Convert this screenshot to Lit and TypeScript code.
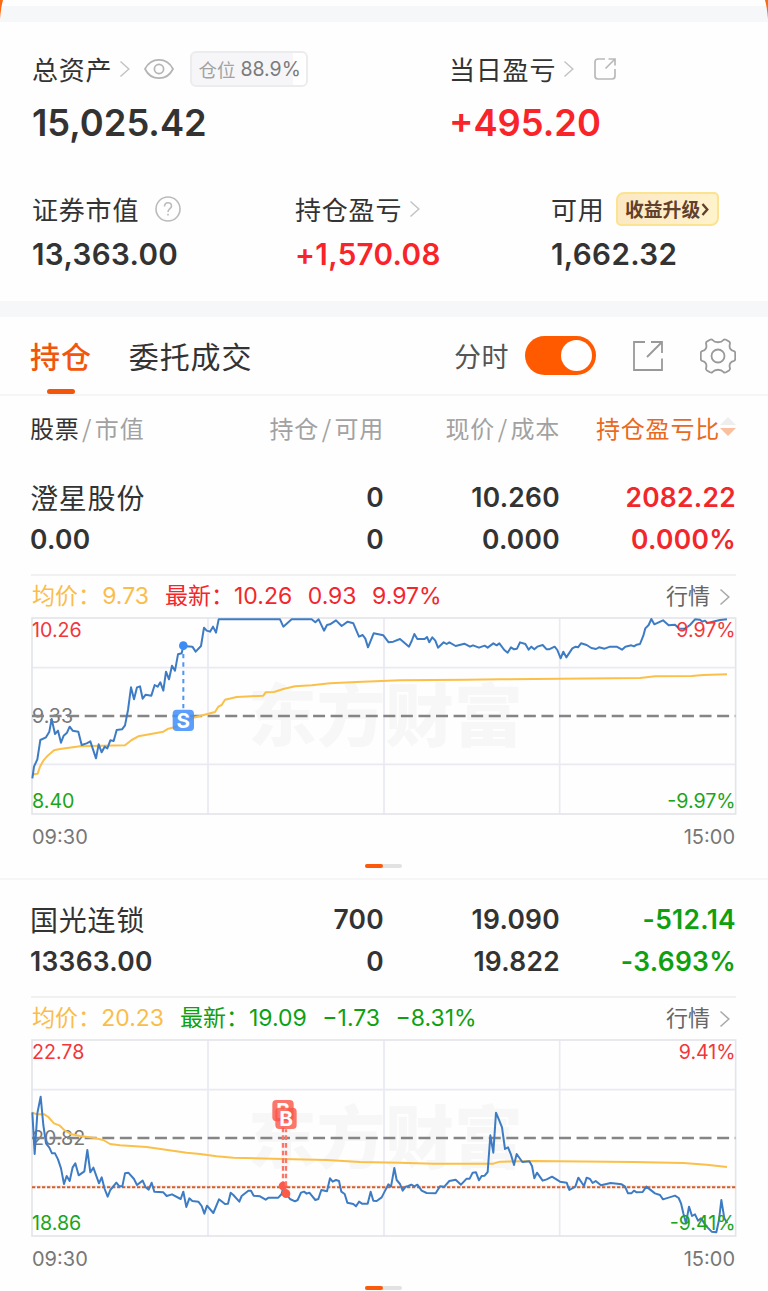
import { LitElement, html, svg, css } from "lit";
import { customElement, property } from "lit/decorators.js";

interface Stock {
  name: string;
  value: string;
  held: string;
  usable: string;
  price: string;
  cost: string;
  profit: string;
  ratio: string;
  tone: string;
  average: string;
  quote: string[];
  chart: Chart;
}

interface Chart {
  top: number;
  high: string;
  mid: string;
  low: string;
  highPct: string;
  lowPct: string;
  priceLine: string;
  averageLine: string;
  costLevel?: number;
  sells: number[][];
  buys: number[][];
}

const stocks: Stock[] = [
  {
    name: "澄星股份", value: "0.00", held: "0", usable: "0", price: "10.260", cost: "0.000",
    profit: "2082.22", ratio: "0.000%", tone: "up", average: "9.73",
    quote: ["10.26", "0.93", "9.97%"],
    chart: {
      top: 141, high: "10.26", mid: "9.33", low: "8.40", highPct: "9.97%", lowPct: "-9.97%",
      sells: [[550, 227, 451]],
      buys: [],
      priceLine: "97,625 102,590 112,568 121,510 138,502 148,485 155,447 165,492 174,482 183,518 191,497 201,488 209,470 218,482 235,485 245,525 260,520 271,514 288,565 296,523 305,547 314,530 322,535 331,511 341,513 350,480 366,478 375,466 384,420 393,352 402,388 411,352 420,349 428,386 437,374 454,377 464,345 473,350 481,337 490,362 498,305 507,328 516,287 525,302 534,253 545,250 550,228 577,230 587,245 603,228 612,173 620,182 630,185 639,170 648,188 656,148 840,148 850,170 875,148 935,148 946,157 956,148 972,182 981,165 990,163 1008,151 1025,168 1043,155 1060,160 1077,200 1088,195 1096,206 1104,232 1121,190 1150,196 1166,217 1180,215 1200,207 1227,230 1235,213 1243,192 1252,207 1274,207 1281,201 1288,217 1297,202 1306,212 1314,233 1331,217 1340,222 1348,217 1367,228 1393,221 1410,230 1419,226 1437,233 1454,227 1463,233 1480,220 1490,226 1498,220 1513,240 1523,248 1533,232 1542,238 1551,236 1560,217 1576,222 1586,239 1594,230 1603,238 1612,230 1628,225 1640,238 1647,238 1664,230 1672,240 1682,265 1690,245 1699,262 1717,235 1727,230 1734,232 1743,220 1760,225 1774,234 1788,237 1797,232 1814,236 1830,230 1850,230 1866,239 1876,230 1894,226 1902,229 1910,224 1920,222 1930,197 1936,175 1946,165 1954,147 1963,163 1989,151 2006,166 2025,164 2038,176 2055,176 2070,165 2085,148 2100,149 2107,155 2115,152 2122,159 2160,150 2181,148",
      averageLine: "97,617 103,612 113,611 120,590 130,572 143,557 162,541 180,537 240,529 375,526 395,510 415,499 490,485 505,476 530,470 560,452 585,442 645,426 655,410 665,405 675,389 710,381 790,377 797,367 822,366 850,357 885,349 935,346 990,340 1070,336 1200,331 1400,329 1500,328 1680,326 1920,324 1965,319 2075,318 2110,315 2181,313",
    },
  },
  {
    name: "国光连锁", value: "13363.00", held: "700", usable: "0", price: "19.090", cost: "19.822",
    profit: "-512.14", ratio: "-3.693%", tone: "down", average: "20.23",
    quote: ["19.09", "−1.73", "−8.31%"],
    chart: {
      top: 477, high: "22.78", mid: "20.82", low: "18.86", highPct: "9.41%", lowPct: "-9.41%",
      costLevel: 922,
      sells: [],
      buys: [[849, 918, 692], [858, 941, 715]],
      priceLine: "97,697 104,822 112,700 122,650 130,735 138,790 148,803 156,820 165,820 174,838 183,865 192,912 200,888 209,903 218,862 226,850 236,886 253,874 262,810 271,877 280,863 297,910 305,892 314,927 323,950 331,930 349,908 358,919 367,919 375,880 385,878 402,897 411,915 428,902 437,922 446,929 455,908 463,935 490,937 500,948 516,943 542,957 550,935 559,981 568,955 577,963 595,965 605,978 613,1001 621,977 640,999 657,958 675,972 684,971 692,938 700,945 718,965 725,948 745,932 753,932 761,947 780,949 797,959 806,953 835,953 845,942 850,920 858,940 870,957 885,964 893,960 903,938 912,935 920,941 928,938 946,960 955,957 964,930 981,934 990,895 998,905 1008,900 1017,903 1024,935 1034,942 1042,968 1060,972 1068,979 1077,965 1086,971 1103,971 1112,935 1120,962 1130,963 1145,952 1165,913 1173,920 1183,864 1190,900 1200,912 1208,932 1217,920 1225,918 1234,914 1243,919 1252,914 1265,932 1280,939 1307,940 1320,919 1333,920 1348,903 1367,899 1383,914 1400,896 1409,896 1418,878 1428,877 1437,901 1445,888 1454,887 1463,876 1471,766 1480,818 1488,698 1498,722 1506,742 1515,807 1524,802 1533,824 1542,855 1550,822 1567,846 1588,844 1596,858 1603,895 1611,878 1628,902 1640,898 1656,890 1680,905 1700,908 1708,930 1726,920 1735,893 1752,918 1760,893 1770,897 1778,909 1787,903 1803,916 1832,909 1865,913 1875,920 1884,940 1894,940 1902,932 1910,937 1928,936 1939,920 1965,940 1980,945 1989,958 2025,947 2036,954 2043,970 2050,1000 2058,1030 2067,980 2076,1008 2085,1003 2094,1022 2103,1015 2120,1040 2135,1055 2149,1057 2157,1020 2164,960 2173,1015 2182,1030",
      averageLine: "97,697 110,703 133,703 145,711 162,730 178,736 195,752 215,763 240,768 280,773 310,780 330,792 360,796 440,801 560,818 600,822 650,829 700,833 850,837 980,840 1080,846 1200,848 1300,851 1480,851 1500,845 1600,843 1900,846 2050,849 2120,854 2181,861",
    },
  },
];

const chevron = (cls: string) =>
  html`<svg class=${cls} viewBox="0 0 12 18"><path d="M1.5 1.5 9.8 9 1.5 16.5" /></svg>`;

@customElement("trend-chart")
export class TrendChart extends LitElement {
  @property({ attribute: false }) data!: Chart;

  static styles = css`
    :host { display: block; height: 198px; }
    svg { display: block; width: 706px; height: 198px; overflow: hidden; }
    text { font-family: Inter, "Liberation Sans", sans-serif; font-size: 59px; }
    polyline { fill: none; stroke-linejoin: round; }
    .grid { stroke: #e9eaf2; stroke-width: 5; fill: none; }
    .frame { stroke: #e4e5ea; stroke-width: 5; }
    .watermark { font-family: "Noto Sans CJK SC", sans-serif; font-size: 206px; font-weight: 900; fill: #f7f7f7; }
    .mid { stroke: #858585; stroke-width: 7; stroke-dasharray: 36 16.7; }
    .cost { stroke: #dc5c22; stroke-width: 6; stroke-dasharray: 10 5; }
    .avg { stroke: #fbc04a; stroke-width: 6; }
    .price { stroke: #3d7cc4; stroke-width: 6; }
    .up { fill: #f1373a; }
    .down { fill: #1ba51b; }
    .center { fill: #777; }
    .end { text-anchor: end; }
    .sell { fill: #3c8cf5; }
    .sell-line { stroke: #4b96f8; stroke-width: 6; stroke-dasharray: 13 12; }
    .buy { fill: #fb5a4b; }
    .tag-buy { fill: #fa5546; opacity: .8; }
    .tag-sell { fill: #4591fa; opacity: .88; }
    .buy-line { stroke: #fb7568; stroke-width: 7; stroke-dasharray: 14 9; }
    .tag-text { fill: #fff; font-size: 62px; font-weight: 700; text-anchor: middle; }
  `;

  render() {
    const d = this.data;
    const t = d.top;
    const tag = (p: number[], kind: string, letter: string) => svg`
      <line class="${kind}-line" x1=${p[0]} x2=${p[0]} y1=${p[1]} y2=${p[2] + (p[2] > p[1] ? -33 : 33)} />
      <circle class=${kind} cx=${p[0]} cy=${p[1]} r="13" />
      <rect class="tag-${kind}" x=${p[0] - 32} y=${p[2] - 32} width="64" height="64" rx="12" />
      <text class="tag-text" x=${p[0]} y=${p[2] + 22}>${letter}</text>`;
    return html`
      <svg viewBox="93 ${t} 2118 594">
        <text class="watermark" x="744" y=${t + 371}>东方财富</text>
        <path class="grid" d="M95 ${t + 152}H2207M95 ${t + 442}H2207M624 ${t + 2}V${t + 592}M1152 ${t + 2}V${t + 592}M1679 ${t + 2}V${t + 592}" />
        <rect class="grid frame" x="96" y=${t + 3} width="2111" height="588" />
        <text class="center" x="96" y=${t + 317}>${d.mid}</text>
        <line class="mid" x1="96" x2="2206" y1=${t + 297} y2=${t + 297} />
        <polyline class="avg" points=${d.averageLine} />
        ${d.costLevel ? svg`<line class="cost" x1="96" x2="2206" y1=${d.costLevel} y2=${d.costLevel} />` : null}
        <polyline class="price" points=${d.priceLine} />
        ${d.sells.map((p) => tag(p, "sell", "S"))}
        ${d.buys.map((p) => tag(p, "buy", "B"))}
        <text class="up" x="96" y=${t + 59}>${d.high}</text>
        <text class="down" x="96" y=${t + 573}>${d.low}</text>
        <text class="up end" x="2207" y=${t + 59}>${d.highPct}</text>
        <text class="down end" x="2207" y=${t + 573}>${d.lowPct}</text>
      </svg>`;
  }
}

@customElement("stock-item")
export class StockItem extends LitElement {
  @property({ attribute: false }) stock!: Stock;

  static styles = css`
    :host { display: flex; flex-direction: column; box-sizing: border-box; height: 422px; padding: 18px 32px 0 31px; border-bottom: 2px solid #f6f6f7; color: #333; }
    .grid { display: grid; grid-template-columns: 177px repeat(3, 176px); grid-auto-rows: 42px; margin-left: -1px; width: 706px; align-items: center; justify-items: end; font: 600 26.4px Inter, "Liberation Sans", sans-serif; letter-spacing: .3px; }
    .grid > :nth-child(4n + 1) { justify-self: start; }
    .grid > :not(:nth-child(4n + 1)) { margin-right: -1px; }
    .name { font: 400 28px "Noto Sans CJK SC", sans-serif; letter-spacing: .8px; }
    .up { color: #f2272b; }
    .down { color: #0fa00f; }
    .info { display: flex; align-items: center; height: 41px; margin-top: 14px; padding-left: 1px; border-top: 2px solid #f1f1f1; font: 400 23px/41px Inter, "Noto Sans CJK SC", sans-serif; }
    .avg { display: flex; justify-content: space-between; color: #fbbd4a; width: 117px; margin-right: 16px; }
    .avg.wide { width: 132px; }
    .info .num { margin-right: 15.500px; }
    .more { display: flex; align-items: center; gap: 9px; margin-left: auto; margin-right: 5px; color: #666; font-size: 22px; }
    .arrow { width: 12px; height: 18px; fill: none; stroke: #aaa; stroke-width: 1.6; }
    .times { display: flex; justify-content: space-between; margin-top: 8px; padding: 0 1px; height: 28px; font: 400 20px/28px Inter, sans-serif; color: #777; }
    .pager { align-self: center; display: flex; width: 37px; height: 4px; margin-top: 13px; border-radius: 2px; background: #e2e2e2; }
    .pager i { width: 18px; border-radius: 2px; background: #fc5a0a; }
  `;

  render() {
    const s = this.stock;
    return html`
      <div class="grid">
        <span class="name">${s.name}</span><span>${s.held}</span><span>${s.price}</span><span class=${s.tone}>${s.profit}</span>
        <span>${s.value}</span><span>${s.usable}</span><span>${s.cost}</span><span class=${s.tone}>${s.ratio}</span>
      </div>
      <div class="info">
        <span class="avg ${s.average.length > 4 ? "wide" : ""}"><span>均价：</span><span>${s.average}</span></span>
        <span class=${s.tone}>最新：</span>${s.quote.map((q) => html`<span class="num ${s.tone}">${q}</span>`)}
        <span class="more">行情${chevron("arrow")}</span>
      </div>
      <trend-chart .data=${s.chart}></trend-chart>
      <div class="times"><span>09:30</span><span>15:00</span></div>
      <div class="pager"><i></i></div>`;
  }
}

@customElement("app-root")
export class AppRoot extends LitElement {
  static styles = css`
    :host { display: block; position: relative; width: 768px; height: 1291px; overflow: hidden; background: #fefefe; color: #333; font-family: "Noto Sans CJK SC", sans-serif; }
    svg { flex: none; fill: none; }
    .corner { position: absolute; top: 0; width: 4px; height: 19px; fill: #fb6a14; }
    .corner.left { left: 0; }
    .corner.right { right: 0; }
    .band { height: 16px; background: #f6f7f9; }
    .band.first { margin-top: 6px; }
    .summary { height: 279px; box-sizing: border-box; padding: 27px 0 0 32px; }
    .row { display: grid; }
    .row.total { grid-template-columns: 417px 1fr; }
    .row.detail { grid-template-columns: 263px 256px 1fr; margin-top: 32px; }
    .label { display: flex; align-items: center; height: 40px; font-size: 26px; letter-spacing: .8px; }
    .label > .t { margin-bottom: 2px; }
    .big { height: 68px; font: 600 36.3px/68px Inter, sans-serif; }
    .mid { height: 50px; font: 600 29.6px/50px Inter, sans-serif; letter-spacing: .35px; }
    .red { color: #f8242a; }
    .chev { width: 12px; height: 18px; margin-left: 7px; stroke: #c4c4c4; stroke-width: 1.5; }
    .eye { width: 30px; height: 22px; margin-left: 13px; stroke: #b4b4b4; stroke-width: 1.7; }
    .badge { box-sizing: border-box; display: flex; align-items: center; gap: 5px; width: 118px; height: 36px; margin-left: 16px; padding-left: 6px; border: 2px solid #ececee; border-radius: 6px; background: linear-gradient(90deg, #f6f6f9 88.9%, #fff 88.9%); color: #a2a2a2; font-size: 18.5px; letter-spacing: 0; }
    .badge b { font: 400 19.5px Inter, sans-serif; color: #7b7b7b; }
    .share { width: 24px; height: 24px; margin-left: 18px; stroke: #b9b9b9; stroke-width: 1.7; }
    .help { width: 26px; height: 26px; margin-left: 16px; stroke: #bbb; stroke-width: 1.6; }
    .promo { box-sizing: border-box; display: flex; align-items: center; justify-content: center; width: 103px; height: 34px; margin-left: 11px; border: 2px solid #fbe38f; border-radius: 8px 5px 8px 5px; background: linear-gradient(100deg, #fbe8c4, #fff3cc); color: #62402c; font-size: 18.8px; font-weight: 700; letter-spacing: 0; }
    .promo span { margin-bottom: 2px; }
    .promo svg { width: 8px; height: 13px; margin-left: 1px; stroke: #62402c; stroke-width: 2.4; }
    .tabs { display: flex; align-items: center; height: 79px; box-sizing: border-box; padding: 0 32px 0 30px; border-bottom: 2px solid #f5f5f6; font-size: 30px; letter-spacing: .9px; }
    .tab { display: flex; flex-direction: column; align-items: center; height: 77px; line-height: 76px; margin-right: 37px; }
    .tab.on { color: #f1560b; font-weight: 500; }
    .tab i { width: 28px; height: 6px; margin-top: -4px; border-radius: 3px; background: #f1560b; }
    .toggle-label { margin-left: auto; font-size: 27px; letter-spacing: .5px; color: #555; }
    .toggle { display: flex; justify-content: flex-end; box-sizing: border-box; width: 71px; height: 39px; margin-left: 16px; padding: 4px; border-radius: 20px; background: #ff5a00; }
    .toggle i { width: 31px; height: 31px; border-radius: 50%; background: #fff; }
    .open { width: 32px; height: 32px; margin-left: 36px; stroke: #999; stroke-width: 1.8; }
    .gear { width: 36px; height: 36px; margin-left: 36px; stroke: #999; stroke-width: 1.8; }
    .head { display: grid; grid-template-columns: 1fr 176px 176px 176px; height: 62px; align-items: center; justify-items: end; padding: 0 32px 0 30px; font-size: 24px; letter-spacing: .8px; color: #a2a2a2; }
    .head > :first-child { justify-self: start; }
    .head b { font-weight: 400; color: #333; }
    .head em { font-style: normal; margin: 0 2.5px; }
    .sort { display: flex; align-items: center; color: #e96a1f; }
    .sort svg { width: 16px; height: 24px; }
  `;

  render() {
    return html`
      <svg class="corner left" viewBox="0 0 4 19"><path d="M0 0H3Q1 7 0 19Z" /></svg>
      <svg class="corner right" viewBox="0 0 4 19"><path d="M4 0H1Q3 7 4 19Z" /></svg>
      <div class="band first"></div>
      <section class="summary">
        <div class="row total">
          <div>
            <div class="label"><span class="t">总资产</span>${chevron("chev")}
              <svg class="eye" viewBox="0 0 30 22"><path d="M1 11C7-1.200 23-1.200 29 11C23 23.200 7 23.200 1 11Z" /><circle cx="15" cy="11" r="4.600" /></svg>
              <span class="badge">仓位<b>88.9%</b></span>
            </div>
            <div class="big">15,025.42</div>
          </div>
          <div>
            <div class="label"><span class="t">当日盈亏</span>${chevron("chev")}
              <svg class="share" viewBox="0 0 24 24"><path d="M12 2H5Q2 2 2 5V19Q2 22 5 22H19Q22 22 22 19V12M15.500 2H22V8.500M22 2 12.500 11.500" /></svg>
            </div>
            <div class="big red">+495.20</div>
          </div>
        </div>
        <div class="row detail">
          <div>
            <div class="label"><span class="t">证券市值</span>
              <svg class="help" viewBox="0 0 26 26"><circle cx="13" cy="13" r="12" /><path d="M9.500 10.500C9.500 5.500 16.500 5.500 16.500 10C16.500 12.700 13 12.600 13 16M13 17.800V19.600" /></svg>
            </div>
            <div class="mid">13,363.00</div>
          </div>
          <div>
            <div class="label"><span class="t">持仓盈亏</span>${chevron("chev")}</div>
            <div class="mid red">+1,570.08</div>
          </div>
          <div>
            <div class="label"><span class="t">可用</span><span class="promo"><span>收益升级</span><svg viewBox="0 0 8 13"><path d="M1.500 1 6.300 6.500 1.500 12" /></svg></span></div>
            <div class="mid">1,662.32</div>
          </div>
        </div>
      </section>
      <div class="band"></div>
      <nav class="tabs">
        <span class="tab on">持仓<i></i></span>
        <span class="tab">委托成交</span>
        <span class="toggle-label">分时</span>
        <span class="toggle"><i></i></span>
        <svg class="open" viewBox="0 0 32 32"><path d="M13 2H2V30H30V18.500M19 2H30V13M30 2 15 17" /></svg>
        <svg class="gear" viewBox="0 0 36 36"><circle cx="18" cy="18" r="6.500" /><path d="M12.500 2C15 5 21 5 23.500 2Q24.500 1 26 1.800L29 3.600Q30.300 4.500 29.900 6C28.800 10 30.500 12.300 34 13.200Q35.200 13.600 35.200 15V21Q35.200 22.400 34 22.800C30.500 23.700 28.800 26 29.900 30Q30.300 31.500 29 32.400L26 34.200Q24.500 35 23.500 34C21 31 15 31 12.500 34Q11.500 35 10 34.200L7 32.400Q5.700 31.500 6.100 30C7.200 26 5.500 23.700 2 22.800Q.8 22.400.8 21V15Q.8 13.600 2 13.200C5.500 12.300 7.200 10 6.100 6Q5.700 4.500 7 3.600L10 1.800Q11.500 1 12.500 2Z" /></svg>
      </nav>
      <div class="head">
        <span><b>股票</b><em>/</em>市值</span>
        <span>持仓<em>/</em>可用</span>
        <span>现价<em>/</em>成本</span>
        <span class="sort">持仓盈亏比<svg viewBox="0 0 16 24"><path d="M0 10 8 2 16 10Z" fill="#eeeeef" /><path d="M0 13H16L8 21Z" fill="#f9c0a0" /></svg></span>
      </div>
      ${stocks.map((s) => html`<stock-item .stock=${s}></stock-item>`)}`;
  }
}
